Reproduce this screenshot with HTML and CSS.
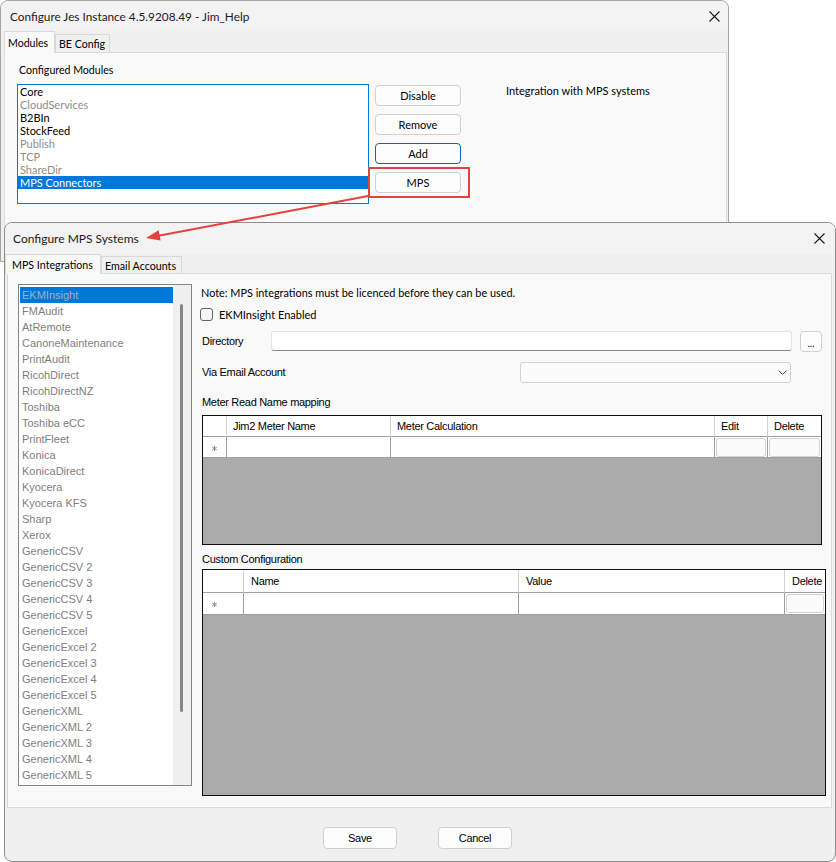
FILE: index.html
```html
<!DOCTYPE html>
<html>
<head>
<meta charset="utf-8">
<link rel="stylesheet" href="styles.css">
</head>
<body>
<div class="desk">
  <section class="win win1">
    <header class="titlebar">
      <span class="title">Configure Jes Instance 4.5.9208.49 - Jim_Help</span>
      <svg class="close" width="11" height="11" viewBox="0 0 11 11"><path d="M0.5 0.5 L10.5 10.5 M10.5 0.5 L0.5 10.5" stroke="#1b1b1b" stroke-width="1.1" fill="none"/></svg>
    </header>
    <nav class="tabs">
      <span class="tab active t-mod">Modules</span>
      <span class="tab t-be">BE Config</span>
    </nav>
    <div class="panel panel1">
      <div class="cfg-label">Configured Modules</div>
      <div class="modrow">
        <ul class="modlist">
          <li>Core</li>
          <li class="dis">CloudServices</li>
          <li>B2BIn</li>
          <li>StockFeed</li>
          <li class="dis">Publish</li>
          <li class="dis">TCP</li>
          <li class="dis">ShareDir</li>
          <li class="sel">MPS Connectors</li>
        </ul>
        <div class="btncol">
          <button class="btn btn1">Disable</button>
          <button class="btn btn1">Remove</button>
          <button class="btn btn1 focus">Add</button>
          <button class="btn btn1">MPS</button>
        </div>
        <div class="desc">Integration with MPS systems</div>
      </div>
    </div>
  </section>

  <section class="win win2">
    <header class="titlebar">
      <span class="title">Configure MPS Systems</span>
      <svg class="close" width="11" height="11" viewBox="0 0 11 11"><path d="M0.5 0.5 L10.5 10.5 M10.5 0.5 L0.5 10.5" stroke="#1b1b1b" stroke-width="1.1" fill="none"/></svg>
    </header>
    <nav class="tabs">
      <span class="tab active t-mps">MPS Integrations</span>
      <span class="tab t-email">Email Accounts</span>
    </nav>
    <div class="panel panel2">
      <div class="mpslist">
        <ul class="items">
          <li class="sel">EKMInsight</li>
          <li>FMAudit</li>
          <li>AtRemote</li>
          <li>CanoneMaintenance</li>
          <li>PrintAudit</li>
          <li>RicohDirect</li>
          <li>RicohDirectNZ</li>
          <li>Toshiba</li>
          <li>Toshiba eCC</li>
          <li>PrintFleet</li>
          <li>Konica</li>
          <li>KonicaDirect</li>
          <li>Kyocera</li>
          <li>Kyocera KFS</li>
          <li>Sharp</li>
          <li>Xerox</li>
          <li>GenericCSV</li>
          <li>GenericCSV 2</li>
          <li>GenericCSV 3</li>
          <li>GenericCSV 4</li>
          <li>GenericCSV 5</li>
          <li>GenericExcel</li>
          <li>GenericExcel 2</li>
          <li>GenericExcel 3</li>
          <li>GenericExcel 4</li>
          <li>GenericExcel 5</li>
          <li>GenericXML</li>
          <li>GenericXML 2</li>
          <li>GenericXML 3</li>
          <li>GenericXML 4</li>
          <li>GenericXML 5</li>
        </ul>
        <div class="vscroll"><div class="thumb"></div></div>
      </div>

      <div class="detail">
        <div class="note">Note: MPS integrations must be licenced before they can be used.</div>
        <div class="chkrow"><span class="chk"></span><span class="chklbl">EKMInsight Enabled</span></div>
        <div class="dirrow">
          <span class="lbl lbl-dir">Directory</span>
          <span class="inp"></span>
          <button class="btn dots">...</button>
        </div>
        <div class="viarow">
          <span class="lbl lbl-via">Via Email Account</span>
          <span class="combo"><svg width="9" height="5" viewBox="0 0 9 5"><path d="M0.5 0.5 L4.5 4.5 L8.5 0.5" stroke="#505050" fill="none" stroke-width="1"/></svg></span>
        </div>
        <div class="lbl sect sect1">Meter Read Name mapping</div>
        <div class="grid g1">
          <div class="grow ghead">
            <span class="c"></span>
            <span class="c">Jim2 Meter Name</span>
            <span class="c">Meter Calculation</span>
            <span class="c">Edit</span>
            <span class="c">Delete</span>
          </div>
          <div class="grow gdata">
            <span class="c rh"><svg class="star" width="7" height="7" viewBox="0 0 7 7"><path d="M3.5 1 V6 M1.3 2.2 L5.7 4.8 M1.3 4.8 L5.7 2.2" stroke="#8a8a8a" stroke-width="1"/></svg></span>
            <span class="c"></span>
            <span class="c"></span>
            <span class="c cb"><span class="cbtn"></span></span>
            <span class="c cb"><span class="cbtn"></span></span>
          </div>
        </div>
        <div class="lbl sect sect2">Custom Configuration</div>
        <div class="grid g2">
          <div class="grow ghead">
            <span class="c"></span>
            <span class="c">Name</span>
            <span class="c">Value</span>
            <span class="c">Delete</span>
          </div>
          <div class="grow gdata">
            <span class="c rh"><svg class="star" width="7" height="7" viewBox="0 0 7 7"><path d="M3.5 1 V6 M1.3 2.2 L5.7 4.8 M1.3 4.8 L5.7 2.2" stroke="#8a8a8a" stroke-width="1"/></svg></span>
            <span class="c"></span>
            <span class="c"></span>
            <span class="c cb"><span class="cbtn"></span></span>
          </div>
        </div>
      </div>
    </div>
    <footer class="footer">
      <button class="btn fbtn">Save</button>
      <button class="btn fbtn">Cancel</button>
    </footer>
  </section>

  <svg class="annot" width="836" height="862" viewBox="0 0 836 862">
    <rect x="369" y="168" width="100" height="29" fill="none" stroke="#e5413f" stroke-width="2"/>
    <path d="M368 196 L156 236.3" stroke="#e5413f" stroke-width="2" fill="none"/>
    <polygon points="146,238 160.6,240.6 158.6,230.3" fill="#e5413f"/>
  </svg>
</div>
</body>
</html>
```
FILE: styles.css
```css
* { box-sizing: border-box; }
html, body { margin: 0; padding: 0; }
body {
  background: #ffffff;
  font-family: "Lato", "Noto Sans", sans-serif;
  font-size: 11px;
  color: #000;
}
.desk {
  position: relative;
  width: 836px;
  height: 862px;
  overflow: hidden;
  background: #ffffff;
}

/* windows */
.win {
  position: absolute;
  display: flex;
  flex-direction: column;
  background: #f0f0f0;
}
.win1 {
  left: 0;
  top: 0;
  width: 729px;
  height: 262px;
  border: 1px solid #a3a3a3;
  border-radius: 8px 8px 0 0;
}
.win2 {
  left: 4px;
  top: 222px;
  width: 832px;
  height: 640px;
  border: 1px solid #8e8e8e;
  border-radius: 8px;
}
.titlebar {
  display: flex;
  align-items: center;
  justify-content: space-between;
  background: #f3f3f3;
  border-radius: 7px 7px 0 0;
  flex: none;
}
.win1 .titlebar { height: 30px; padding: 0 8px 0 9px; }
.win2 .titlebar { height: 31px; padding: 0 10px 0 8px; }
.title { white-space: nowrap; color: #1a1a1a; font-size: 11.8px; }
.win2 .title { font-size: 12px; }
.close { display: block; }

/* tabs */
.tabs {
  display: flex;
  align-items: flex-end;
  flex: none;
}
.win1 .tabs { height: 21px; padding-left: 3px; }
.win2 .tabs { height: 19px; padding-left: 0; }
.tab {
  display: flex;
  align-items: center;
  border: 1px solid #d9d9d9;
  border-bottom: none;
  background: #f0f0f0;
  white-space: nowrap;
  font-size: 10.6px;
}
.tab.active {
  background: #f9f9f9;
  position: relative;
  z-index: 1;
  margin-bottom: -1px;
}
.t-mod { width: 51px; height: 22px; padding-left: 3px; }
.t-be { width: 55px; height: 18px; padding-left: 3px; }
.t-mps { width: 96px; height: 20px; padding-left: 6px; font-size: 10.7px; }
.t-email { width: 81px; height: 17px; padding-left: 3px; font-size: 10.7px; }

/* panels */
.panel {
  background: #f9f9f9;
  border: 1px solid #dadada;
}
.panel1 {
  flex: 1;
  margin: 0 1px 0 3px;
  padding: 9px 0 0 12px;
}
.panel2 {
  flex: none;
  height: 535px;
  margin: 0 3px 0 2px;
  padding: 10px 0 0 10px;
  display: flex;
  align-items: flex-start;
}

/* first dialog */
.cfg-label {
  height: 16px;
  line-height: 16px;
  padding-left: 2px;
  margin-bottom: 6px;
  font-size: 10.6px;
}
.modrow { display: flex; align-items: flex-start; }
.modlist {
  list-style: none;
  margin: 0;
  padding: 0;
  width: 352px;
  height: 120px;
  border: 1px solid #0078d7;
  background: #fff;
}
.modlist li {
  height: 13px;
  line-height: 13px;
  padding-left: 2px;
  white-space: nowrap;
}
.modlist li.dis { color: #8d8d8d; }
.modlist li.sel { background: #0078d7; color: #fff; }
.btncol {
  display: flex;
  flex-direction: column;
  gap: 8px;
  margin: 1px 0 0 6px;
}
.btn {
  font-family: inherit;
  font-size: 11px;
  color: #000;
  background: #fdfdfd;
  border: 1px solid #d0d0d0;
  border-radius: 4px;
  padding: 0;
  margin: 0;
}
.btn1 { width: 86px; height: 21px; }
.btn.focus { border-color: #0a64c2; }
.desc {
  margin: -1px 0 0 45px;
  line-height: 16px;
  white-space: nowrap;
}

/* second dialog list */
.mpslist {
  flex: none;
  width: 174px;
  height: 502px;
  border: 1px solid #838383;
  background: #fff;
  display: flex;
}
.items {
  list-style: none;
  margin: 0;
  padding: 2px 0 0 1px;
  flex: 1;
  font-family: "Liberation Sans", Arial, sans-serif;
  font-size: 11px;
  color: #7e7e7e;
}
.items li {
  height: 16px;
  line-height: 16px;
  padding-left: 2px;
  white-space: nowrap;
}
.items li.sel { background: #0078d7; color: #a7b0bb; }
.vscroll {
  width: 18px;
  flex: none;
  background: #f0f0f0;
}
.thumb {
  width: 3px;
  height: 408px;
  margin: 19px 0 0 7px;
  background: #868686;
  border-radius: 2px;
}

/* detail column */
.detail {
  flex: 1;
  margin-left: 9px;
  display: flex;
  flex-direction: column;
}
.note { height: 18px; line-height: 18px; white-space: nowrap; font-size: 10.9px; }
.chkrow {
  display: flex;
  align-items: center;
  height: 18px;
  margin-top: 3px;
}
.chk {
  width: 13px;
  height: 13px;
  margin-left: -1px;
  border: 1px solid #636363;
  border-radius: 3px;
  background: #f5f5f5;
}
.chklbl { margin-left: 6px; }
.lbl {
  font-family: "Liberation Sans", Arial, sans-serif;
  font-size: 11px;
  letter-spacing: -0.3px;
  white-space: nowrap;
}
.dirrow, .viarow {
  display: flex;
  align-items: center;
  height: 22px;
}
.dirrow { margin-top: 7px; }
.viarow { margin-top: 9px; }
.lbl-dir { width: 70px; padding-left: 1px; }
.lbl-via { width: 319px; padding-left: 1px; }
.inp {
  width: 521px;
  height: 20px;
  background: #fff;
  border: 1px solid #e3e3e3;
  border-bottom-color: #8a8a8a;
  border-radius: 3px;
}
.dots {
  width: 22px;
  height: 21px;
  margin-left: 8px;
  font-size: 10px;
  line-height: 10px;
  padding-top: 4px;
  border-radius: 4px;
}
.combo {
  width: 271px;
  height: 21px;
  background: #fbfbfb;
  border: 1px solid #d3d3d3;
  border-radius: 3px;
  display: flex;
  align-items: center;
  justify-content: flex-end;
  padding: 1px 3px 0 0;
}
.combo svg { display: block; }
.sect { height: 18px; line-height: 18px; padding-left: 1px; }
.sect1 { margin-top: 10px; }
.sect2 { margin-top: 5px; }

/* grids */
.grid {
  border: 1px solid #0f0f0f;
  background: #ababab;
  display: flex;
  flex-direction: column;
  margin-left: 1px;
}
.g1 { width: 620px; height: 130px; margin-top: 4px; }
.g2 { width: 624px; height: 227px; margin-top: 1px; }
.grow { display: grid; background: #fff; }
.g1 .grow { grid-template-columns: 24px 164px 324px 53px 53px; height: 21px; }
.g2 .grow { grid-template-columns: 41px 275px 266px 40px; }
.g2 .ghead { height: 23px; }
.g2 .gdata { height: 22px; }
.c {
  display: flex;
  align-items: center;
  border-right: 1px solid #a0a0a0;
  border-bottom: 1px solid #a0a0a0;
  padding-left: 6px;
  font-family: "Liberation Sans", Arial, sans-serif;
  font-size: 11px;
  letter-spacing: -0.3px;
  white-space: nowrap;
  overflow: hidden;
}
.g2 .c { padding-left: 7px; }
.ghead .c { border-right-color: #d2d2d2; }
.grow .c:last-child { border-right: none; }
.c.rh { padding-left: 8px; }
.g2 .c.rh { padding-left: 8px; }
.star { display: block; margin-top: 2px; }
.c.cb, .g2 .c.cb { padding: 1px 1px 0 1px; align-items: flex-start; }
.cbtn {
  flex: 1;
  height: 19px;
  background: #fbfbfb;
  border: 1px solid #d3d3d3;
  border-radius: 3px;
}

/* footer */
.footer {
  flex: 1;
  display: flex;
  align-items: flex-start;
  gap: 41px;
  padding: 19px 0 0 318px;
}
.fbtn {
  width: 74px;
  height: 22px;
  font-family: "Liberation Sans", Arial, sans-serif;
  font-size: 11px;
  letter-spacing: -0.3px;
}

/* annotations */
.annot {
  position: absolute;
  left: 0;
  top: 0;
  pointer-events: none;
}
```
